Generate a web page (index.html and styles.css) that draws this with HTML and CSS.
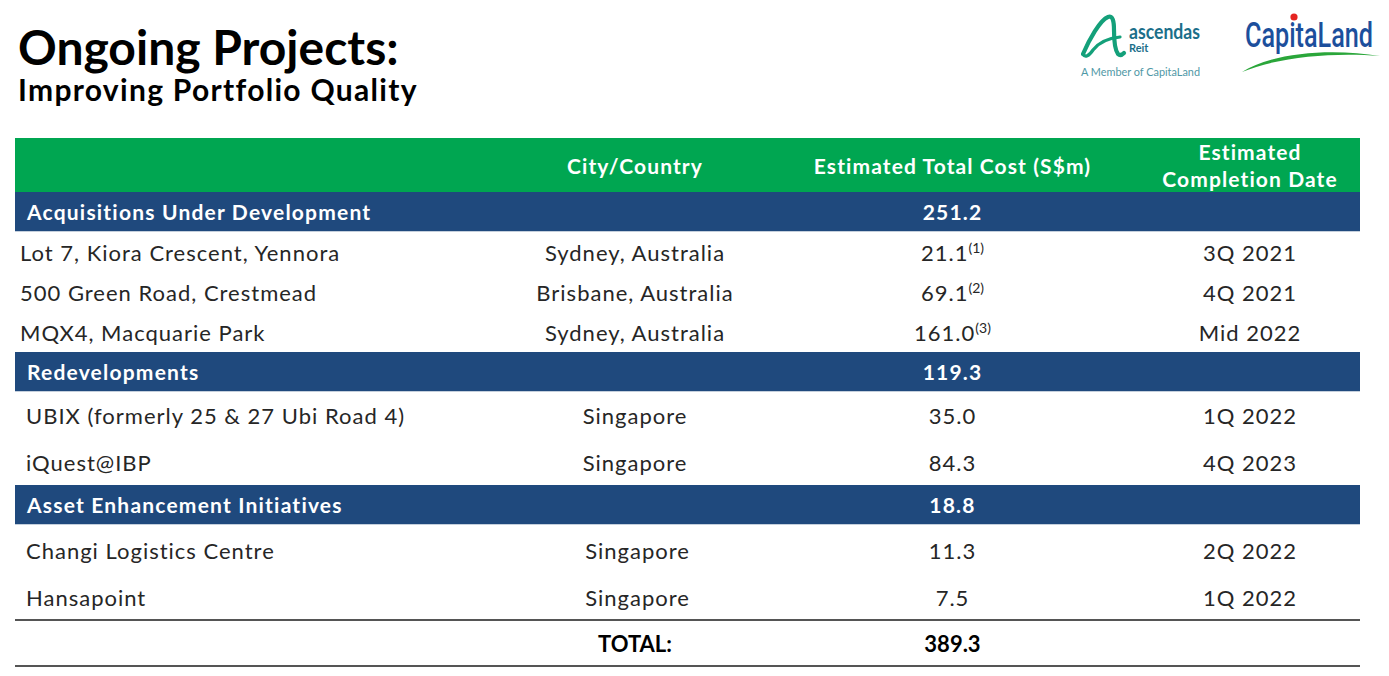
FILE: index.html
```html
<!DOCTYPE html>
<html lang="en">
<head>
<meta charset="utf-8">
<title>Ongoing Projects</title>
<link rel="stylesheet" href="styles.css">
</head>
<body>
<div class="slide">
  <header class="top">
    <div class="titles">
      <h1 class="title">Ongoing Projects:</h1>
      <h2 class="subtitle">Improving Portfolio Quality</h2>
    </div>
    <div class="logos">
      <svg class="logo-ascendas" width="128" height="70" viewBox="0 0 128 70" aria-label="ascendas Reit">
        <path d="M5 44 C 11 30, 22 10, 30 7 C 35 5, 36 12, 36 20 C 36 30, 37 40, 40 44 C 42 46, 44 45, 46 43" fill="none" stroke="#14a07a" stroke-width="4.2" stroke-linecap="round" stroke-linejoin="round"/>
        <path d="M5 44 C 7 48, 11 46, 15 40 C 21 32, 32 28, 42 27" fill="none" stroke="#14a07a" stroke-width="3.2" stroke-linecap="round"/>
        <text x="51" y="29" class="asc-name" textLength="71" lengthAdjust="spacingAndGlyphs">ascendas</text>
        <text x="51" y="42" class="asc-reit">Reit</text>
        <text x="3" y="66" class="asc-member" textLength="119" lengthAdjust="spacingAndGlyphs">A Member of CapitaLand</text>
      </svg>
      <svg class="logo-capitaland" width="148" height="68" viewBox="0 0 148 68" aria-label="CapitaLand">
        <text class="cap-name" transform="translate(7 37) scale(1 1.3)" x="0" y="0" textLength="128" lengthAdjust="spacingAndGlyphs">CapitaLand</text>
        <circle cx="56" cy="7" r="3.6" fill="#e52521"/>
        <path d="M4 62 C 35 42, 95 38, 142 46 C 95 42, 40 47, 4 62 Z" fill="#2aa63a"/>
      </svg>
    </div>
  </header>

  <table class="proj">
    <colgroup>
      <col class="c-name">
      <col class="c-city">
      <col class="c-cost">
      <col class="c-date">
    </colgroup>
    <thead>
      <tr class="head">
        <th></th>
        <th>City/Country</th>
        <th>Estimated Total Cost (S$m)</th>
        <th>Estimated<br>Completion Date</th>
      </tr>
    </thead>
    <tbody>
      <tr class="sec">
        <td class="name">Acquisitions Under Development</td>
        <td></td>
        <td>251.2</td>
        <td></td>
      </tr>
      <tr class="item short">
        <td class="name tight">Lot 7, Kiora Crescent, Yennora</td>
        <td>Sydney, Australia</td>
        <td>21.1<sup class="fn">(1)</sup></td>
        <td>3Q 2021</td>
      </tr>
      <tr class="item short">
        <td class="name tight">500 Green Road, Crestmead</td>
        <td>Brisbane, Australia</td>
        <td>69.1<sup class="fn">(2)</sup></td>
        <td>4Q 2021</td>
      </tr>
      <tr class="item short">
        <td class="name tight">MQX4, Macquarie Park</td>
        <td>Sydney, Australia</td>
        <td>161.0<sup class="fn">(3)</sup></td>
        <td>Mid 2022</td>
      </tr>
      <tr class="sec">
        <td class="name">Redevelopments</td>
        <td></td>
        <td>119.3</td>
        <td></td>
      </tr>
      <tr class="item">
        <td class="name">UBIX (formerly 25 &amp; 27 Ubi Road 4)</td>
        <td>Singapore</td>
        <td>35.0</td>
        <td>1Q 2022</td>
      </tr>
      <tr class="item slim">
        <td class="name">iQuest@IBP</td>
        <td>Singapore</td>
        <td>84.3</td>
        <td>4Q 2023</td>
      </tr>
      <tr class="sec">
        <td class="name">Asset Enhancement Initiatives</td>
        <td></td>
        <td>18.8</td>
        <td></td>
      </tr>
      <tr class="item low">
        <td class="name">Changi Logistics Centre</td>
        <td class="shift">Singapore</td>
        <td>11.3</td>
        <td>2Q 2022</td>
      </tr>
      <tr class="item low">
        <td class="name">Hansapoint</td>
        <td class="shift">Singapore</td>
        <td>7.5</td>
        <td>1Q 2022</td>
      </tr>
      <tr class="total">
        <td></td>
        <td>TOTAL:</td>
        <td>389.3</td>
        <td></td>
      </tr>
    </tbody>
  </table>
</div>
</body>
</html>
```
FILE: styles.css
```css
html, body {
  margin: 0;
  padding: 0;
  background: #ffffff;
}

.slide {
  width: 1389px;
  height: 676px;
  box-sizing: border-box;
  padding: 0 29px 0 15px;
  font-family: Lato, "Liberation Sans", sans-serif;
  color: #222222;
  overflow: hidden;
}

.top {
  height: 138px;
  display: flex;
  justify-content: space-between;
  align-items: flex-start;
}

.titles {
  margin-left: 3px;
  padding-top: 23px;
}

.title {
  margin: 0;
  font-size: 48px;
  line-height: 48px;
  font-weight: 700;
  color: #000000;
}

.subtitle {
  margin: 3px 0 0 0;
  font-size: 30px;
  line-height: 30px;
  font-weight: 700;
  letter-spacing: 1.3px;
  color: #000000;
}

.logos {
  display: flex;
  align-items: flex-start;
  gap: 32px;
  padding-top: 10px;
  margin-right: -26px;
}

.logo-ascendas,
.logo-capitaland {
  display: block;
  overflow: visible;
}

.asc-name {
  font-family: Lato, "Liberation Sans", sans-serif;
  font-weight: 700;
  font-size: 20px;
  fill: #1b6f8a;
}

.asc-reit {
  font-family: Lato, "Liberation Sans", sans-serif;
  font-weight: 700;
  font-size: 11px;
  fill: #1b6f8a;
}

.asc-member {
  font-family: Lato, "Liberation Sans", sans-serif;
  font-size: 11px;
  fill: #4f98a6;
}

.cap-name {
  font-family: Roboto, "Liberation Sans", sans-serif;
  font-size: 27px;
  font-weight: 500;
  fill: #1c4f9c;
}

.proj {
  width: 1345px;
  table-layout: fixed;
  border-collapse: collapse;
  border-spacing: 0;
  font-size: 22px;
  letter-spacing: 1px;
}

.c-name { width: 490px; }
.c-city { width: 260px; }
.c-cost { width: 375px; }
.c-date { width: 220px; }

.proj th,
.proj td {
  padding: 0;
  text-align: center;
  vertical-align: middle;
}

.head th {
  height: 54px;
  background: #00a651;
  color: #ffffff;
  font-size: 21px;
  line-height: 27px;
  font-weight: 700;
  letter-spacing: 1.1px;
}

.sec td {
  height: 39px;
  background: #1f497d;
  color: #ffffff;
  font-weight: 700;
  font-size: 21px;
  letter-spacing: 1.2px;
  border-bottom: 1px solid #c4cfdc;
}

.proj td.name {
  text-align: left;
  padding-left: 11px;
}

.sec td.name {
  padding-left: 12px;
}

.proj td.tight {
  padding-left: 5px;
}

.item td {
  height: 47px;
  color: #262626;
}

.item.slim td {
  height: 46px;
}

.item.short td {
  height: 40px;
}

.item.low td {
  padding-top: 4px;
  height: 43px;
}

.proj td.shift {
  padding-left: 5px;
}

.fn {
  font-size: 14px;
  line-height: 0;
  letter-spacing: 0;
  vertical-align: 8px;
}

.total td {
  height: 44px;
  font-weight: 700;
  letter-spacing: 0;
  color: #000000;
  border-top: 2px solid #555555;
  border-bottom: 2px solid #555555;
}
```
